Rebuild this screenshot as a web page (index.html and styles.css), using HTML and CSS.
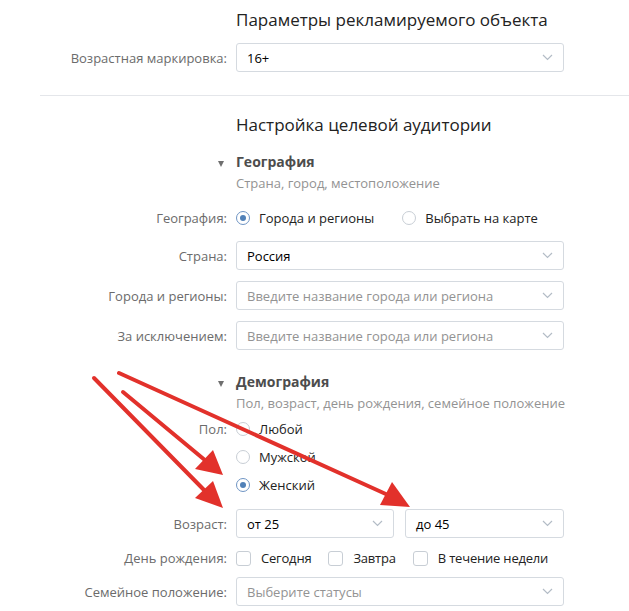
FILE: index.html
```html
<!DOCTYPE html>
<html lang="ru">
<head>
  <meta charset="UTF-8">
  <title>Настройка объявления</title>
  <link rel="stylesheet" href="styles.css">
</head>
<body>

  <div class="page">
    <div class="section-title">Параметры рекламируемого объекта</div>

    <div class="row mt-11">
      <div class="label">Возрастная маркировка:</div>
      <div class="select"><span class="value">16+</span><svg class="chevron" width="11" height="7" viewBox="0 0 11 7"><polyline points="1,1 5.5,5.5 10,1"/></svg></div>
    </div>

    <div class="separator"></div>

    <div class="section-title mt-17">Настройка целевой аудитории</div>

    <!-- География -->
    <div class="row mt-15">
      <div class="label"><span class="caret"></span></div>
      <div class="block-title">География</div>
    </div>
    <div class="row mt-2">
      <div></div>
      <div class="block-sub">Страна, город, местоположение</div>
    </div>

    <div class="row mt-16">
      <div class="label">География:</div>
      <div class="options">
        <label class="option"><span class="radio checked"></span>Города и регионы</label>
        <label class="option"><span class="radio"></span>Выбрать на карте</label>
      </div>
    </div>

    <div class="row mt-13">
      <div class="label">Страна:</div>
      <div class="select"><span class="value">Россия</span><svg class="chevron" width="11" height="7" viewBox="0 0 11 7"><polyline points="1,1 5.5,5.5 10,1"/></svg></div>
    </div>
    <div class="row mt-11">
      <div class="label">Города и регионы:</div>
      <div class="select"><span class="placeholder">Введите название города или региона</span><svg class="chevron" width="11" height="7" viewBox="0 0 11 7"><polyline points="1,1 5.5,5.5 10,1"/></svg></div>
    </div>
    <div class="row mt-11">
      <div class="label">За исключением:</div>
      <div class="select"><span class="placeholder">Введите название города или региона</span><svg class="chevron" width="11" height="7" viewBox="0 0 11 7"><polyline points="1,1 5.5,5.5 10,1"/></svg></div>
    </div>

    <!-- Демография -->
    <div class="row mt-22">
      <div class="label"><span class="caret"></span></div>
      <div class="block-title">Демография</div>
    </div>
    <div class="row mt-2">
      <div></div>
      <div class="block-sub">Пол, возраст, день рождения, семейное положение</div>
    </div>

    <div class="row mt-7">
      <div class="label">Пол:</div>
      <label class="option"><span class="radio"></span>Любой</label>
    </div>
    <div class="row mt-8">
      <div></div>
      <label class="option"><span class="radio"></span>Мужской</label>
    </div>
    <div class="row mt-8">
      <div></div>
      <label class="option"><span class="radio checked"></span>Женский</label>
    </div>

    <div class="row mt-14">
      <div class="label">Возраст:</div>
      <div class="pair">
        <div class="select"><span class="value">от 25</span><svg class="chevron" width="11" height="7" viewBox="0 0 11 7"><polyline points="1,1 5.5,5.5 10,1"/></svg></div>
        <div class="select"><span class="value">до 45</span><svg class="chevron" width="11" height="7" viewBox="0 0 11 7"><polyline points="1,1 5.5,5.5 10,1"/></svg></div>
      </div>
    </div>

    <div class="row mt-10">
      <div class="label">День рождения:</div>
      <div class="options checks">
        <label class="option"><span class="checkbox"></span>Сегодня</label>
        <label class="option"><span class="checkbox"></span>Завтра</label>
        <label class="option"><span class="checkbox"></span>В течение недели</label>
      </div>
    </div>

    <div class="row mt-9">
      <div class="label">Семейное положение:</div>
      <div class="select"><span class="placeholder">Выберите статусы</span><svg class="chevron" width="11" height="7" viewBox="0 0 11 7"><polyline points="1,1 5.5,5.5 10,1"/></svg></div>
    </div>

    <!-- стрелки поверх формы -->
    <svg class="arrows" width="629" height="611" viewBox="0 0 629 611">
      <g stroke="#e2312b" stroke-width="4" stroke-linecap="round" fill="none">
        <line x1="94" y1="378" x2="206" y2="492"/>
        <line x1="123" y1="392" x2="206" y2="461"/>
        <line x1="119" y1="373" x2="388" y2="495"/>
      </g>
      <g fill="#e2312b">
        <polygon points="223,508 195,498 213,481"/>
        <polygon points="223,475 195,469 213,450"/>
        <polygon points="410,507 380,505 392,482"/>
      </g>
    </svg>
  </div>

</body>
</html>
```

FILE: styles.css
```css
body {
  margin: 0;
  font-family: 'Open Sans', sans-serif;
  font-size: 13px;
  color: #000;
  background: #fff;
}

.page {
  position: relative;
  padding-top: 8px;
  height: 603px;
  overflow: hidden;
}

.section-title {
  margin-left: 236px;
  font-size: 17px;
  line-height: 24px;
  color: #222;
}

.row {
  display: grid;
  grid-template-columns: 227px 328px;
  column-gap: 9px;
  align-items: center;
}

.mt-2 { margin-top: 2px; }
.mt-7 { margin-top: 7px; }
.mt-8 { margin-top: 8px; }
.mt-9 { margin-top: 9px; }
.mt-10 { margin-top: 10px; }
.mt-11 { margin-top: 11px; }
.mt-13 { margin-top: 13px; }
.mt-14 { margin-top: 14px; }
.mt-15 { margin-top: 15px; }
.mt-16 { margin-top: 16px; }
.mt-17 { margin-top: 17px; }
.mt-22 { margin-top: 22px; }

.label {
  text-align: right;
  color: #6b6b6b;
  line-height: 20px;
}

.separator {
  margin: 23px 0 0 40px;
  height: 1px;
  background: #e4e6ea;
}

.select {
  height: 29px;
  box-sizing: border-box;
  border: 1px solid #d5dae0;
  border-radius: 3px;
  display: flex;
  align-items: center;
  justify-content: space-between;
  padding: 0 10px 0 10px;
}

.select .value {
  color: #000;
}

.select .placeholder {
  color: #939393;
}

.chevron polyline {
  fill: none;
  stroke: #b3bcc6;
  stroke-width: 1.2;
}

.pair {
  display: grid;
  grid-template-columns: 158px 159px;
  column-gap: 11px;
}

.caret {
  display: inline-block;
  margin-right: 3px;
  border-left: 3px solid transparent;
  border-right: 3px solid transparent;
  border-top: 6px solid #6f6f6f;
  vertical-align: middle;
}

.block-title {
  font-size: 14px;
  font-weight: bold;
  color: #4d4d4d;
  line-height: 20px;
}

.block-sub {
  color: #939393;
  line-height: 18px;
  white-space: nowrap;
}

.options {
  display: flex;
  gap: 28px;
}

.options.checks {
  gap: 17px;
  letter-spacing: -0.2px;
}

.option {
  display: flex;
  align-items: center;
  line-height: 20px;
  color: #222;
  white-space: nowrap;
}

.radio {
  width: 14px;
  height: 14px;
  box-sizing: border-box;
  border: 1px solid #c8ced5;
  border-radius: 50%;
  margin-right: 9px;
  position: relative;
}

.radio.checked {
  border-color: #6f95c4;
}

.radio.checked::after {
  content: '';
  position: absolute;
  left: 3px;
  top: 3px;
  width: 6px;
  height: 6px;
  border-radius: 50%;
  background: #5181b8;
}

.checkbox {
  width: 15px;
  height: 15px;
  box-sizing: border-box;
  border: 1px solid #c8ced5;
  border-radius: 3px;
  margin-right: 10px;
}

.arrows {
  position: absolute;
  left: 0;
  top: 0;
  pointer-events: none;
}
```
